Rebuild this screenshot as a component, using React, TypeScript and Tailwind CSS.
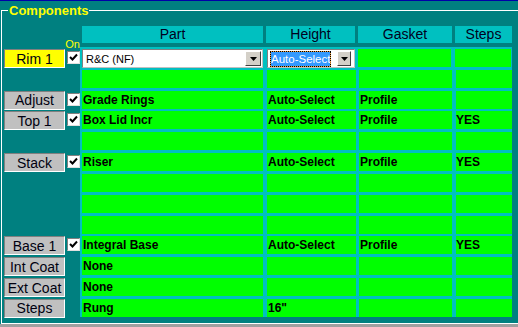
import React from "react";

type Row = {
  label?: string;
  active?: boolean;
  check?: boolean;
  combo?: boolean;
  part?: string;
  height?: string;
  gasket?: string;
  steps?: string;
};

const rows: Row[] = [
  { label: "Rim 1", active: true, check: true, combo: true },
  {},
  { label: "Adjust", check: true, part: "Grade Rings", height: "Auto-Select", gasket: "Profile" },
  { label: "Top 1", check: true, part: "Box Lid Incr", height: "Auto-Select", gasket: "Profile", steps: "YES" },
  {},
  { label: "Stack", check: true, part: "Riser", height: "Auto-Select", gasket: "Profile", steps: "YES" },
  {},
  {},
  {},
  { label: "Base 1", check: true, part: "Integral Base", height: "Auto-Select", gasket: "Profile", steps: "YES" },
  { label: "Int Coat", part: "None" },
  { label: "Ext Coat", part: "None" },
  { label: "Steps", part: "Rung", height: '16"' },
];

function CheckBox() {
  return (
    <div className="ml-[2px] mt-[2px] w-[13px] h-[13px] bg-white border border-t-[#808080] border-l-[#808080] border-b-[#e0e0e0] border-r-[#e0e0e0] flex items-center justify-center">
      <svg width="9" height="9" viewBox="0 0 9 9">
        <polyline points="1,4 3.5,6.5 8,1.5" fill="none" stroke="#000" strokeWidth="2" />
      </svg>
    </div>
  );
}

function DropButton({ w = "w-[16px]" }: { w?: string }) {
  return (
    <div className={`shrink-0 ${w} h-[15px] bg-[#d4d0c8] border border-t-white border-l-white border-b-[#404040] border-r-[#404040] flex items-center justify-center`}>
      <svg width="7" height="4" viewBox="0 0 7 4">
        <polygon points="0,0 7,0 3.5,4" fill="#000" />
      </svg>
    </div>
  );
}

export default function App() {
  return (
    <div className="w-[518px] h-[327px] overflow-hidden bg-[#008080] flex flex-col font-['Liberation_Sans',Arial,sans-serif]">
      <div className="h-px bg-[#0000a8]" />

      {/* Components group */}
      <div className="h-[323px] flex flex-col ml-px border-b border-white">
        <div className="h-[19px] flex">
          <div className="w-[7px] mt-[9px] border-t border-l border-white" />
          <span className="px-[1px] text-[13px] font-bold text-[#ffff00] leading-[19px]">
            Components
          </span>
          <div className="flex-1 mt-[9px] border-t border-white" />
        </div>

        <div className="flex-1 flex border-l border-white">
          {/* left: row buttons */}
          <div className="w-[78px] mt-[6px] flex flex-col">
            <div className="h-[23px] flex items-end justify-end">
              <span className="text-[11px] leading-[12px] text-[#ffff00] mb-[-1px]">On</span>
            </div>
            <div className="grid grid-rows-[repeat(13,18px)] gap-y-[2.83px]">
              {rows.map((r, i) => (
                <div key={i} className="flex pl-[2px]">
                  {r.label && (
                    <div
                      className={`w-[61px] h-[19px] border border-t-[#808080] border-l-[#808080] border-b-white border-r-white flex items-center justify-center text-[14px] leading-none text-[#000010] ${
                        r.active ? "bg-[#ffff00]" : "bg-[#c0c0c0]"
                      }`}
                    >
                      {r.label}
                    </div>
                  )}
                  {r.check && <CheckBox />}
                </div>
              ))}
            </div>
          </div>

          {/* right: table */}
          <div className="w-[432px] mt-[6px] flex flex-col">
            <div className="flex pl-[2px] h-[17px] text-[14px] text-[#000020] leading-[17px] text-center">
              <div className="w-[181px] bg-[#00c0c0]">Part</div>
              <div className="ml-[3px] w-[89px] bg-[#00c0c0]">Height</div>
              <div className="ml-[3px] w-[94px] bg-[#00c0c0]">Gasket</div>
              <div className="ml-[3px] w-[57px] bg-[#00c0c0]">Steps</div>
            </div>

            <div className="mt-[4px] bg-[#00c0c0] pl-[2px] pt-[2px] grid grid-rows-[repeat(13,18px)] gap-y-[2.83px] text-[12px] font-bold leading-[18px] text-black">
              {rows.map((r, i) =>
                r.combo ? (
                  <div key={i} className="flex h-[19px]">
                    <div className="w-[181px] bg-white border border-t-[#808080] border-l-[#808080] border-b-[#c0c0c0] border-r-[#c0c0c0] flex items-center pl-[3px] pr-[1px]">
                      <span className="flex-1 text-[11px] font-normal">R&amp;C (NF)</span>
                      <DropButton />
                    </div>
                    <div className="ml-[4px] w-[88px] bg-white border border-t-[#808080] border-l-[#808080] border-b-[#c0c0c0] border-r-[#c0c0c0] flex items-center pl-[2px] pr-[3px]">
                      <span className="shrink-0 bg-[#f0a040] border border-dotted border-black">
                        <span className="block whitespace-nowrap bg-[#3399ff] text-white text-[11.5px] font-normal leading-[14px]">
                          Auto-Select
                        </span>
                      </span>
                      <div className="ml-auto">
                        <DropButton w="w-[14px]" />
                      </div>
                    </div>
                    <div className="ml-[3px] w-[93px] h-[18px] bg-[#00ff00]" />
                    <div className="ml-[4px] w-[56px] h-[18px] bg-[#00ff00]" />
                  </div>
                ) : (
                  <div key={i} className="flex">
                    <div className="w-[181px] bg-[#00ff00] pl-px">{r.part}</div>
                    <div className="ml-[4px] w-[89px] bg-[#00ff00] pl-px">{r.height}</div>
                    <div className="ml-[3px] w-[93px] bg-[#00ff00] pl-px">{r.gasket}</div>
                    <div className="ml-[4px] w-[56px] bg-[#00ff00]">{r.steps}</div>
                  </div>
                )
              )}
            </div>
          </div>
        </div>
      </div>

      <div className="flex-1 bg-[#a0a0a0]" />
    </div>
  );
}
